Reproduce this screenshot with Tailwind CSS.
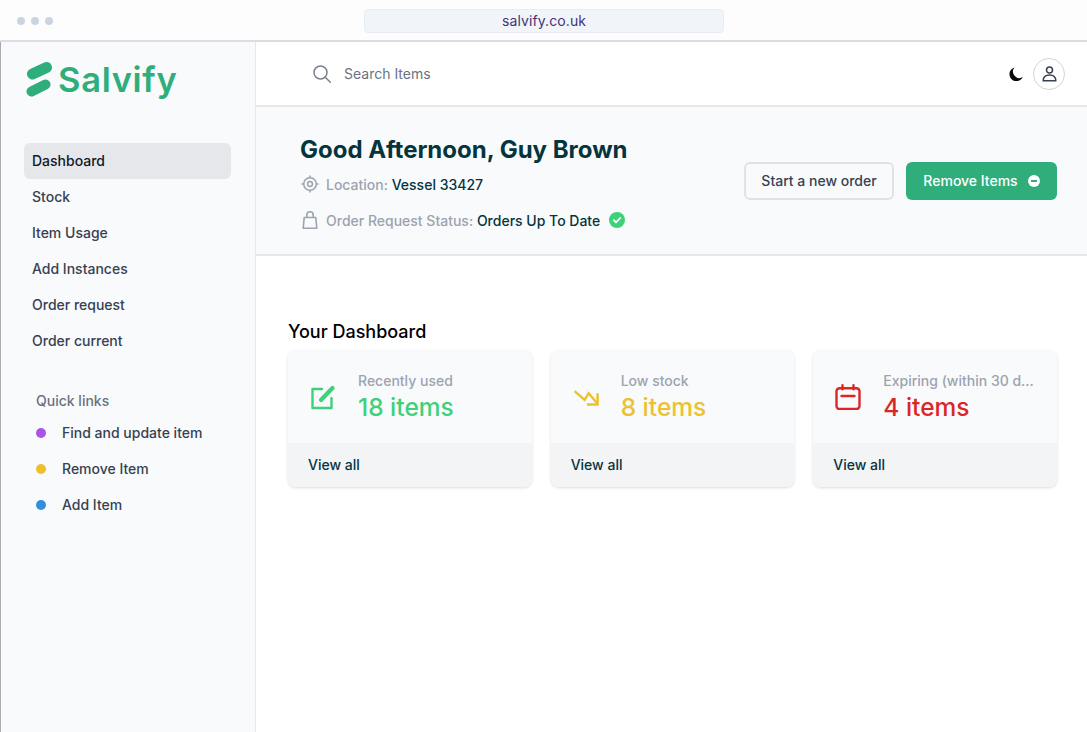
<!DOCTYPE html>
<html lang="en">
<head>
  <meta charset="UTF-8">
  <meta name="viewport" content="width=device-width, initial-scale=1.0">
  <title>Salvify Dashboard</title>
  <script src="https://cdn.jsdelivr.net/npm/@tailwindcss/browser@4"></script>
</head>
<body class="bg-white font-['Inter',sans-serif] h-[732px] w-[1087px] overflow-hidden">
  <!-- browser chrome -->
  <header class="flex items-center h-[42px] pt-px bg-[#fdfdfe] border-b-2 border-[#dcdde0]">
    <div class="flex gap-[6px] pl-[17px]">
      <span class="w-2 h-2 rounded-full bg-[#cbd5e1]"></span>
      <span class="w-2 h-2 rounded-full bg-[#cbd5e1]"></span>
      <span class="w-2 h-2 rounded-full bg-[#cbd5e1]"></span>
    </div>
    <div class="ml-[311px] w-[360px] h-[24px] flex items-center justify-center rounded bg-[#f1f5f9] border border-[#e8edf4] text-[14px] tracking-[0.1px] text-[#44337a]">salvify.co.uk</div>
  </header>

  <div class="flex h-[690px]">
    <!-- sidebar -->
    <aside class="w-[256px] shrink-0 bg-[#f9fafc] border-l border-l-[#a9acb3] border-r border-r-[#e5e7eb]">
      <div class="flex items-center h-[76px] pl-[25px] mb-[25px]">
        <svg class="w-[27px] h-[36px] shrink-0" viewBox="0 0 27 36" fill="none" stroke="#2fae7c" stroke-linecap="round">
          <path d="M6.500 12 20.500 5.500" stroke-width="11"/>
          <path d="M5.500 29.500 19.500 22.500" stroke-width="10"/>
        </svg>
        <span class="ml-[5px] text-[34.500px] leading-none font-semibold tracking-[0.7px] text-[#2fae7c]">Salvify</span>
      </div>
      <nav class="pl-[23px] pr-[24px] text-[14px] font-medium text-[#374151]">
        <a class="flex items-center h-[36px] pb-px pl-2 rounded-md bg-[#e5e7eb] text-[#111827]">Dashboard</a>
        <a class="flex items-center h-[36px] pb-px pl-2">Stock</a>
        <a class="flex items-center h-[36px] pb-px pl-2">Item Usage</a>
        <a class="flex items-center h-[36px] pb-px pl-2">Add Instances</a>
        <a class="flex items-center h-[36px] pb-px pl-2">Order request</a>
        <a class="flex items-center h-[36px] pb-px pl-2">Order current</a>
      </nav>
      <div class="px-[23px] mt-[28px] text-[14px] font-medium text-[#374151]">
        <h3 class="flex items-center h-[28px] pb-px pl-3 text-[#6b7280] text-[14px]">Quick links</h3>
        <a class="flex items-center h-[36px] pb-px pl-3 gap-[16px]"><span class="w-[10px] h-[10px] rounded-full bg-[#a855e8]"></span>Find and update item</a>
        <a class="flex items-center h-[36px] pb-px pl-3 gap-[16px]"><span class="w-[10px] h-[10px] rounded-full bg-[#ecc12d]"></span>Remove Item</a>
        <a class="flex items-center h-[36px] pb-px pl-3 gap-[16px]"><span class="w-[10px] h-[10px] rounded-full bg-[#2f90e0]"></span>Add Item</a>
      </div>
    </aside>

    <main class="flex-1 min-w-0">
      <!-- search bar -->
      <div class="flex items-center h-[65px] border-b-2 border-[#e5e7eb] pl-[57px] pr-[22px]">
        <svg class="w-[18px] h-[18px] text-[#7b818c]" viewBox="0 0 18 18" fill="none" stroke="currentColor" stroke-width="1.500" stroke-linecap="round"><circle cx="7.500" cy="7.500" r="6.500"/><path d="m12.300 12.300 5 5"/></svg>
        <span class="ml-[13px] text-[14px] text-[#6b7280]">Search Items</span>
        <svg class="ml-auto w-[14px] h-[14px]" viewBox="0 0 14 14" fill="#0a0a0a"><path d="M5.500.4a6.500 6.500 0 0 0 8.300 9.700A7 7 0 1 1 5.500.4Z"/></svg>
        <span class="ml-[10px] flex items-center justify-center w-[32px] h-[32px] rounded-full border border-[#d1d5db]">
          <svg class="w-[15px] h-[16px] text-[#374151]" viewBox="0 0 15 16" fill="none" stroke="currentColor" stroke-width="1.500"><circle cx="7.500" cy="4" r="3"/><path d="M1.200 14.800c0-4 2.600-5.800 6.300-5.800s6.300 1.800 6.300 5.800Z"/></svg>
        </span>
      </div>

      <!-- greeting -->
      <section class="flex items-center h-[149px] bg-[#f9fafc] border-b-2 border-[#e5e7eb] pl-[44px] pr-[30px]">
        <div class="pt-[9px] pb-px">
          <h1 class="text-[24px] leading-[36px] font-bold text-[#04353d] mt-px -mb-[2px]">Good Afternoon, Guy Brown</h1>
          <p class="flex items-center h-[36px] text-[14px] font-medium text-[#9ca3af]">
            <svg class="w-[18px] h-[18px] ml-px mr-[7px] text-[#9ca3af]" viewBox="0 0 18 18" fill="none" stroke="currentColor" stroke-width="1.500"><circle cx="9" cy="9" r="6.300"/><circle cx="9" cy="9" r="2.400"/><path d="M9 .5v2.200M9 15.300v2.200M.5 9h2.200M15.300 9h2.200"/></svg>
            Location:&nbsp;<span class="text-[#04353d]">Vessel 33427</span>
          </p>
          <p class="flex items-center h-[36px] text-[14px] font-medium text-[#9ca3af]">
            <svg class="w-[18px] h-[18px] ml-px mr-[7px] text-[#9ca3af]" viewBox="0 0 18 18" fill="none" stroke="currentColor" stroke-width="1.600" stroke-linejoin="round"><path d="M3.200 6.500h11.600l1 10.700H2.200ZM5.800 6.500V4a3.200 3.200 0 0 1 6.400 0v2.500"/></svg>
            Order Request Status:&nbsp;<span class="text-[#04353d]">Orders Up To Date</span>
            <svg class="w-4 h-4 ml-[9px]" viewBox="0 0 16 16"><circle cx="8" cy="8" r="8" fill="#3fd17a"/><path d="m4.800 8.200 2.200 2.200 4.200-4.400" fill="none" stroke="#fff" stroke-width="1.800" stroke-linecap="round" stroke-linejoin="round"/></svg>
          </p>
        </div>
        <div class="ml-auto flex gap-3">
          <button class="h-[38px] w-[150px] rounded-md border-2 border-[#e0e2e6] bg-[#f9fafc] text-[14px] font-medium text-[#374151]">Start a new order</button>
          <button class="flex items-center justify-center gap-[10px] h-[38px] w-[151px] rounded-md bg-[#2fae7c] text-[14px] font-medium text-white">
            Remove Items
            <svg class="w-3 h-3" viewBox="0 0 12 12"><circle cx="6" cy="6" r="6" fill="#fff"/><rect x="3" y="5" width="6" height="2" fill="#2fae7c"/></svg>
          </button>
        </div>
      </section>

      <!-- dashboard cards -->
      <section class="pt-[62px] pl-[32px] pr-[30px]">
        <h2 class="text-[18px] leading-[28px] font-medium text-black mb-[4px]">Your Dashboard</h2>
        <div class="grid grid-cols-3 gap-[19px]">
          <div class="rounded-lg overflow-hidden bg-[#f9fafc] shadow-[0_1px_3px_rgba(0,0,0,0.14)]">
            <div class="flex items-center h-[93px] pl-[22px] pr-4">
              <svg class="w-[26px] h-[26px] shrink-0 text-[#3fd17a]" viewBox="0 0 26 26" fill="none" stroke="currentColor" stroke-linecap="round" stroke-linejoin="round"><path d="M12 5H2.500v19h19V14" stroke-width="2.400"/><path d="M11 16 22.500 4" stroke-width="4.200"/></svg>
              <div class="ml-[22px] min-w-0">
                <p class="text-[14px] leading-[20px] font-medium text-[#9ca3af] truncate">Recently used</p>
                <p class="text-[24.500px] leading-[32px] font-medium text-[#3fd17a]">18 items</p>
              </div>
            </div>
            <a class="flex items-center h-[44px] pb-px pl-[20px] bg-[#f3f4f6] text-[14px] font-medium text-[#04353d]">View all</a>
          </div>
          <div class="rounded-lg overflow-hidden bg-[#f9fafc] shadow-[0_1px_3px_rgba(0,0,0,0.14)]">
            <div class="flex items-center h-[93px] pl-[22px] pr-4">
              <svg class="w-[26px] h-[26px] shrink-0 text-[#ecc12d]" viewBox="0 0 26 26" fill="none" stroke="currentColor" stroke-width="2.400"><path d="M1.600 7.200l10 8.600 4-6.600 9 10.600"/><path d="M24.600 9.200v11.300H14"/></svg>
              <div class="ml-[22px] min-w-0">
                <p class="text-[14px] leading-[20px] font-medium text-[#9ca3af] truncate">Low stock</p>
                <p class="text-[24.500px] leading-[32px] font-medium text-[#ecc12d]">8 items</p>
              </div>
            </div>
            <a class="flex items-center h-[44px] pb-px pl-[20px] bg-[#f3f4f6] text-[14px] font-medium text-[#04353d]">View all</a>
          </div>
          <div class="rounded-lg overflow-hidden bg-[#f9fafc] shadow-[0_1px_3px_rgba(0,0,0,0.14)]">
            <div class="flex items-center h-[93px] pl-[22px] pr-4">
              <svg class="w-[26px] h-[26px] shrink-0 text-[#dc2626]" viewBox="0 0 26 26" fill="none" stroke="currentColor" stroke-width="2.400" stroke-linecap="round"><rect x="1.500" y="4.200" width="23" height="20.800" rx="3"/><path d="M7.500 1.200v4M18.500 1.200v4M6.500 12h13"/></svg>
              <div class="ml-[22px] min-w-0">
                <p class="text-[14px] leading-[20px] font-medium text-[#9ca3af] truncate">Expiring (within 30 days)</p>
                <p class="text-[24.500px] leading-[32px] font-medium text-[#dc2626]">4 items</p>
              </div>
            </div>
            <a class="flex items-center h-[44px] pb-px pl-[20px] bg-[#f3f4f6] text-[14px] font-medium text-[#04353d]">View all</a>
          </div>
        </div>
      </section>
    </main>
  </div>
</body>
</html>
